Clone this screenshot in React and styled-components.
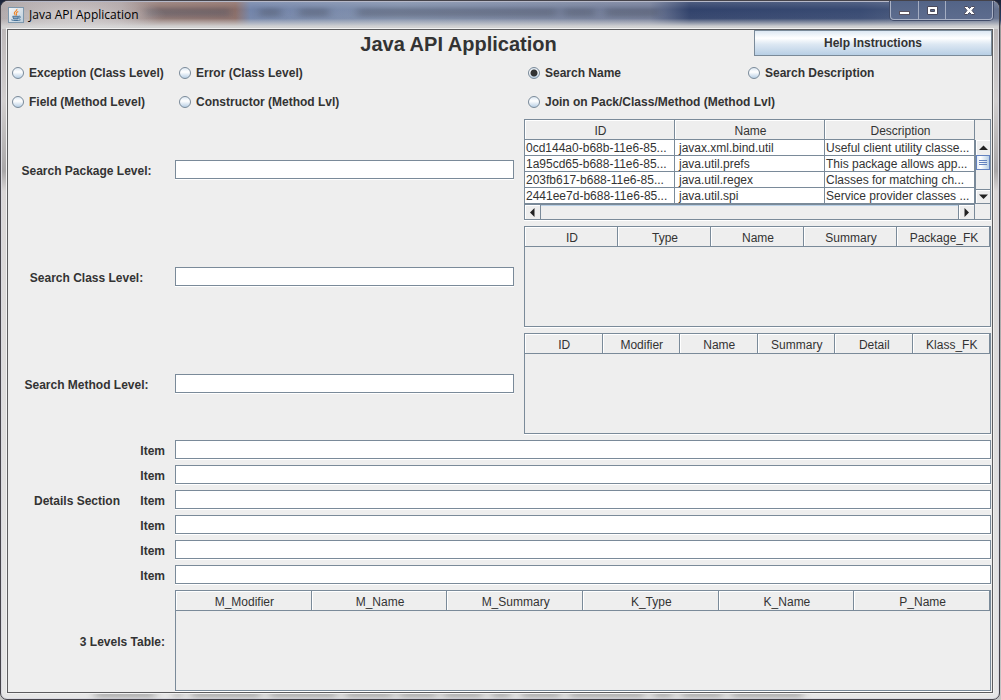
import React from "react";
import styled, { createGlobalStyle } from "styled-components";

const line = "#7a8a99";
const panel = "#eeeeee";
const ink = "#333333";

const GlobalStyle = createGlobalStyle`
  *, *::before, *::after { box-sizing: border-box; }
  body {
    margin: 0;
    background: linear-gradient(#1a2238 0, #2b4166 20px, #9a9a9a 26px, #c4c4c4 100%);
    font: 12px/16px "Liberation Sans", Arial, sans-serif;
    color: ${ink};
  }
  button, input { font: inherit; color: inherit; margin: 0; padding: 0; }
`;

const Frame = styled.div`
  position: relative;
  display: flex;
  flex-direction: column;
  min-height: 100vh;
  margin-right: 1px;
  padding: 0 6px 6px;
  border: 1px solid #45434a;
  border-radius: 8px 8px 7px 7px;
  box-shadow: inset 0 0 0 1px #d9d9e0;
  background: linear-gradient(#b5b0b2 0, #d2cfcf 100px, #a9a7a8 170px, #d9d6d6 190px, #dedddd 60%, #e6e6e6 100%);
  overflow: hidden;
`;

const Glass = styled.svg`
  position: absolute;
  left: 0;
  width: 100%;
  pointer-events: none;
  ${(p) => (p.$bottom ? "bottom: 0; height: 7px;" : "top: 0; height: 28px;")}
`;

const TitleBar = styled.header`
  position: relative;
  display: flex;
  align-items: flex-start;
  height: 28px;
  padding-left: 1px;
`;

const AppName = styled.div`
  flex: 1;
  display: flex;
  align-items: center;
  gap: 5px;
  height: 28px;
  color: #000;
  font: 12px/16px "Open Sans", sans-serif;
`;

const WindowButtons = styled.div`
  display: flex;
  height: 19px;
  border: 1px solid #aab2c6;
  border-top: 0;
  border-radius: 0 0 4px 4px;
  background: linear-gradient(#536487, #5d6c8e);
  box-shadow: 0 0 0 1px #414c69;
`;

const WindowButton = styled.button`
  display: grid;
  place-items: center;
  width: ${(p) => p.$width}px;
  border: 0;
  border-left: ${(p) => (p.$first ? "0" : "1px solid #a4adc2")};
  background: none;
`;

const Client = styled.main`
  position: relative;
  flex: 1;
  display: flex;
  flex-direction: column;
  border: 1px solid #5c5c5e;
  box-shadow: 0 0 0 1px #f1f1f1;
  background: ${panel};
`;

const HeadRow = styled.div`
  display: grid;
  grid-template-columns: 167px 1fr 238px;
  height: 29px;
`;

const Heading = styled.h1`
  grid-column: 2;
  margin: 0 12px 0 0;
  text-align: center;
  font-size: 20px;
  line-height: 28px;
`;

const HelpButton = styled.button`
  height: 26px;
  border: 1px solid ${line};
  background: linear-gradient(#dde8f3 0, #ffffff 30%, #dde8f3 55%, #b8cfe5 100%);
  font-weight: bold;
`;

const RadioRow = styled.div`
  display: grid;
  grid-template-columns: 167px minmax(0, 349fr) minmax(0, 220fr) minmax(0, 244fr);
  align-items: center;
  height: 29px;
  padding: 0 0 1px 4px;
`;

const RadioLabel = styled.label`
  display: flex;
  align-items: center;
  gap: 5px;
  font-weight: bold;
  white-space: nowrap;
`;

const Radio = styled.input`
  appearance: none;
  flex: none;
  width: 12px;
  height: 12px;
  border: 1px solid ${line};
  border-radius: 50%;
  background: linear-gradient(#dde8f3, #ffffff 40%, #b8cfe5);
  &:checked {
    background: radial-gradient(circle, #333 0 3px, transparent 4px),
      linear-gradient(#dde8f3, #ffffff 40%, #b8cfe5);
  }
`;

const Searches = styled.div`
  display: flex;
  flex-direction: column;
  gap: 6px;
  padding: 2px 1px 6px 0;
`;

const SearchRow = styled.div`
  display: grid;
  grid-template-columns: 157px minmax(0, 339fr) minmax(0, 467fr);
  column-gap: 10px;
  align-items: center;
  height: 101px;
`;

const FieldLabel = styled.label`
  padding-top: ${(p) => (p.$end ? 3 : 2)}px;
  font-weight: bold;
  text-align: ${(p) => (p.$end ? "right" : "center")};
`;

const TextField = styled.input`
  width: 100%;
  height: 19px;
  padding: 0 3px;
  border: 1px solid ${line};
  border-radius: 0;
  outline: 0;
  background: #fff;
  box-shadow: 0 1px #fff;
`;

const TablePanel = styled.div`
  height: 101px;
  border: 1px solid ${line};
  box-shadow: 0 1px #fff;
`;

const Table = styled.table`
  width: 100%;
  table-layout: fixed;
  border-collapse: separate;
  border-spacing: 0;
`;

const HeadCell = styled.th`
  height: 20px;
  padding: 3px 0 0 2px;
  border-right: 1px solid ${line};
  border-bottom: 1px solid ${line};
  box-shadow: inset 1px 1px #fff;
  font-weight: normal;
  line-height: 16px;
`;

const Cell = styled.td`
  height: 16px;
  padding: 1px 0 0 ${(p) => (p.$middle ? 4 : 1)}px;
  border-right: 1px solid ${line};
  border-bottom: 1px solid ${line};
  background: #fff;
  line-height: 14px;
  white-space: nowrap;
`;

const ScrollGrid = styled.div`
  display: grid;
  grid-template-columns: minmax(0, 1fr) 15px;
  grid-template-rows: 84px 15px;
`;

const ScrollBar = styled.div`
  display: flex;
  justify-content: space-between;
  background: ${panel};
  ${(p) =>
    p.$vertical
      ? `flex-direction: column; margin-top: 20px; border-left: 1px solid ${line};`
      : `border-top: 1px solid ${line}; border-right: 1px solid ${line}; box-shadow: inset 0 1px #b8cfe5;`}
`;

const ArrowButton = styled.button`
  display: grid;
  place-items: center;
  width: ${(p) => (p.$side ? "16px" : "100%")};
  height: ${(p) => (p.$side ? "14px" : "15px")};
  border: 0 solid ${line};
  border-width: ${(p) => p.$edges};
  background: ${panel};
  box-shadow: inset 1px 1px #fff;
`;

const Thumb = styled.div`
  height: 15px;
  margin-bottom: auto;
  padding: 4px 2px;
  border: 1px solid #6382bf;
  background: linear-gradient(90deg, #e4edf7, #fff 30%, #b8cfe5);
  &::before {
    content: "";
    display: block;
    height: 5px;
    background: repeating-linear-gradient(#6382bf 0 1px, transparent 1px 2px);
  }
`;

const Details = styled.section`
  display: grid;
  grid-template-columns: 111px minmax(0, 1fr);
  padding: 0 1px 5px 0;
`;

const DetailsTitle = styled.h2`
  margin: 0;
  padding: 53px 0 0 26px;
  font-size: 12px;
  line-height: 16px;
  white-space: nowrap;
`;

const ItemList = styled.div`
  display: flex;
  flex-direction: column;
  gap: 5px;
`;

const ItemRow = styled.div`
  display: grid;
  grid-template-columns: 46px minmax(0, 1fr);
  column-gap: 10px;
  height: 20px;
`;

const LevelsRow = styled.section`
  display: grid;
  grid-template-columns: 157px minmax(0, 1fr);
  column-gap: 10px;
  padding-right: 1px;
`;

const LevelsTitle = styled.h2`
  align-self: center;
  margin: 0;
  padding-top: 2px;
  text-align: right;
  font-size: 12px;
  line-height: 16px;
`;

const packages = [
  ["0cd144a0-b68b-11e6-85...", "javax.xml.bind.util", "Useful client utility classe..."],
  ["1a95cd65-b688-11e6-85...", "java.util.prefs", "This package allows app..."],
  ["203fb617-b688-11e6-85...", "java.util.regex", "Classes for matching ch..."],
  ["2441ee7d-b688-11e6-85...", "java.util.spi", "Service provider classes ..."],
];

const smudges = [
  [144, 86], [258, 22], [298, 30], [356, 62], [414, 142], [562, 32], [604, 54],
];

const lowerSmudges = [
  [94, 60], [174, 6], [190, 70], [268, 68], [344, 48], [398, 38], [442, 40],
  [490, 20], [520, 40], [568, 76], [652, 20], [680, 42], [730, 72],
];

const Arrow = ({ points }) => (
  <svg width="9" height="9" viewBox="0 0 9 9" aria-hidden="true">
    <polygon points={points} fill="#222" />
  </svg>
);

const JavaIcon = () => (
  <svg width="16" height="16" viewBox="0 0 16 16" aria-hidden="true">
    <defs>
      <linearGradient id="tile" x1="0" y1="0" x2="1" y2="1">
        <stop offset="0" stopColor="#f6f8fa" />
        <stop offset="1" stopColor="#b9cbd9" />
      </linearGradient>
    </defs>
    <rect x=".5" y=".5" width="15" height="15" fill="url(#tile)" stroke="#7d97ac" />
    <path d="M8.9 2c.5 2-3 2.700-2.600 4.400.2.8 1.100 1.200.9 2.100M10.300 4.600c-1.500.6-2.600 1.300-1.900 2.300.4.600.3 1.100-.3 1.600" fill="none" stroke="#ee8426" strokeWidth="1.100" />
    <path d="M4.600 9.300h6.200M5.300 11h4.800M4.800 9.500l.8 2.400h4.200l.6-2.400M11 9.200c2-.3 1.800 1.900-.4 2.100M3.300 12.800c2.300 1 7 1 9.300 0" fill="none" stroke="#426f97" />
  </svg>
);

function HeaderRow({ columns }) {
  return (
    <thead>
      <tr>{columns.map((c) => <HeadCell key={c} scope="col">{c}</HeadCell>)}</tr>
    </thead>
  );
}

function EmptyTable({ columns, label }) {
  return (
    <TablePanel>
      <Table aria-label={label}><HeaderRow columns={columns} /></Table>
    </TablePanel>
  );
}

function PackageTable() {
  return (
    <TablePanel>
      <ScrollGrid>
        <Table aria-label="Packages">
          <HeaderRow columns={["ID", "Name", "Description"]} />
          <tbody>
            {packages.map((row) => (
              <tr key={row[0]}>
                {row.map((v, i) => <Cell key={i} $middle={i === 1}>{v}</Cell>)}
              </tr>
            ))}
          </tbody>
        </Table>
        <ScrollBar $vertical>
          <ArrowButton $edges="0" aria-label="Scroll up"><Arrow points="4.500,2.500 9,7 0,7" /></ArrowButton>
          <Thumb />
          <ArrowButton $edges="1px 0" aria-label="Scroll down"><Arrow points="0,2.500 9,2.500 4.500,7" /></ArrowButton>
        </ScrollBar>
        <ScrollBar>
          <ArrowButton $side $edges="0 1px 0 0" aria-label="Scroll left"><Arrow points="2,4.500 6.500,0 6.500,9" /></ArrowButton>
          <ArrowButton $side $edges="0 0 0 1px" aria-label="Scroll right"><Arrow points="2.500,0 7,4.500 2.500,9" /></ArrowButton>
        </ScrollBar>
      </ScrollGrid>
    </TablePanel>
  );
}

function SearchLevel({ id, label, children }) {
  return (
    <SearchRow>
      <FieldLabel htmlFor={id}>{label}</FieldLabel>
      <TextField id={id} type="text" />
      {children}
    </SearchRow>
  );
}

function Choice({ children, ...rest }) {
  return (
    <RadioLabel>
      <Radio type="radio" name="mode" {...rest} />
      {children}
    </RadioLabel>
  );
}

export default function App() {
  return (
    <>
      <GlobalStyle />
      <Frame>
        <Glass aria-hidden="true">
          <defs>
            <linearGradient id="sky">
              <stop offset="0" stopColor="#aaa2a4" />
              <stop offset=".12" stopColor="#a59899" />
              <stop offset=".16" stopColor="#927974" />
              <stop offset=".235" stopColor="#8d6f69" />
              <stop offset=".25" stopColor="#7385aa" />
              <stop offset=".4" stopColor="#8190ac" />
              <stop offset=".65" stopColor="#737d99" />
              <stop offset=".69" stopColor="#31426b" />
              <stop offset=".86" stopColor="#384a72" />
              <stop offset="1" stopColor="#65728f" />
            </linearGradient>
            <linearGradient id="fade" x1="0" y1="0" x2="0" y2="1">
              <stop offset="0" stopColor="#fff" stopOpacity=".15" />
              <stop offset=".3" stopColor="#fff" stopOpacity="0" />
              <stop offset=".62" stopColor="#d4d4d4" stopOpacity=".05" />
              <stop offset=".9" stopColor="#d4d4d4" stopOpacity=".95" />
              <stop offset="1" stopColor="#d4d4d4" />
            </linearGradient>
            <radialGradient id="glow">
              <stop offset="0" stopColor="#e4e2e3" stopOpacity=".75" />
              <stop offset="1" stopColor="#e4e2e3" stopOpacity="0" />
            </radialGradient>
            <filter id="soft" x="-20%" y="-100%" width="140%" height="300%"><feGaussianBlur stdDeviation="4 2" /></filter>
          </defs>
          <rect width="100%" height="28" fill="url(#sky)" />
          <g filter="url(#soft)" fill="#4a4f60" opacity=".4">
            {smudges.map(([x, w]) => <rect key={x} x={x} y="7" width={w} height="9" />)}
          </g>
          <rect width="100%" height="28" fill="url(#fade)" />
          <ellipse cx="75" cy="14" rx="90" ry="18" fill="url(#glow)" />
          <path d="M5 .5H5000" stroke="#b5b8c8" />
        </Glass>
        <Glass $bottom aria-hidden="true">
          <g filter="url(#soft)" fill="#555" opacity=".5">
            {lowerSmudges.map(([x, w]) => <rect key={x} x={x} y="1" width={w} height="4" />)}
          </g>
        </Glass>
        <TitleBar>
          <AppName><JavaIcon />Java API Application</AppName>
          <WindowButtons>
            <WindowButton $first $width={27} aria-label="Minimize">
              <svg width="13" height="13" aria-hidden="true"><rect x="1.500" y="7.500" width="10" height="3" fill="#fff" stroke="#5b5360" /></svg>
            </WindowButton>
            <WindowButton $width={27} aria-label="Maximize">
              <svg width="13" height="13" aria-hidden="true"><path fillRule="evenodd" d="M1.500 2.500h10v8h-10zM4.500 5.500v2h4v-2z" fill="#fff" stroke="#4b4a5c" /></svg>
            </WindowButton>
            <WindowButton $width={47} aria-label="Close">
              <svg width="13" height="13" aria-hidden="true"><path d="M1.500 2.500h3l2 2 2-2h3v1L9 6.500l2.500 3v1h-3l-2-2-2 2h-3v-1L4 6.500 1.500 3.500z" fill="#fff" stroke="#4b4a5c" /></svg>
            </WindowButton>
          </WindowButtons>
        </TitleBar>
        <Client>
          <HeadRow>
            <Heading>Java API Application</Heading>
            <HelpButton>Help Instructions</HelpButton>
          </HeadRow>
          <RadioRow>
            <Choice>Exception (Class Level)</Choice>
            <Choice>Error (Class Level)</Choice>
            <Choice defaultChecked>Search Name</Choice>
            <Choice>Search Description</Choice>
          </RadioRow>
          <RadioRow>
            <Choice>Field (Method Level)</Choice>
            <Choice>Constructor (Method Lvl)</Choice>
            <Choice>Join on Pack/Class/Method (Method Lvl)</Choice>
          </RadioRow>
          <Searches>
            <SearchLevel id="package" label="Search Package Level:"><PackageTable /></SearchLevel>
            <SearchLevel id="class" label="Search Class Level:">
              <EmptyTable label="Classes" columns={["ID", "Type", "Name", "Summary", "Package_FK"]} />
            </SearchLevel>
            <SearchLevel id="method" label="Search Method Level:">
              <EmptyTable label="Methods" columns={["ID", "Modifier", "Name", "Summary", "Detail", "Klass_FK"]} />
            </SearchLevel>
          </Searches>
          <Details>
            <DetailsTitle>Details Section</DetailsTitle>
            <ItemList>
              {[1, 2, 3, 4, 5, 6].map((n) => (
                <ItemRow key={n}>
                  <FieldLabel $end htmlFor={"item" + n}>Item</FieldLabel>
                  <TextField id={"item" + n} type="text" />
                </ItemRow>
              ))}
            </ItemList>
          </Details>
          <LevelsRow>
            <LevelsTitle>3 Levels Table:</LevelsTitle>
            <EmptyTable label="Three levels" columns={["M_Modifier", "M_Name", "M_Summary", "K_Type", "K_Name", "P_Name"]} />
          </LevelsRow>
        </Client>
      </Frame>
    </>
  );
}
